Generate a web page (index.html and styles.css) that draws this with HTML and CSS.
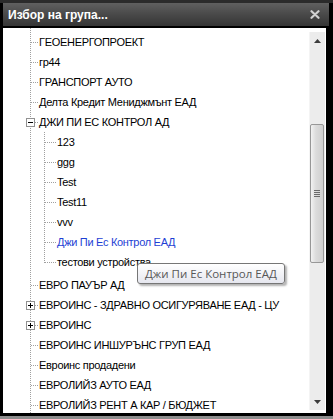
FILE: index.html
```html
<!DOCTYPE html>
<html lang="bg">
<head>
  <meta charset="UTF-8">
  <meta name="viewport" content="width=device-width, initial-scale=1.0">
  <title>Избор на група</title>
  <link rel="stylesheet" href="styles.css">
</head>
<body>

  <div class="window">
    <div class="titlebar">
      <span class="title">Избор на група...</span>
      <svg class="close" width="10" height="9" viewBox="0 0 10 9">
        <path d="M1.5 1.2l7 6.6M8.5 1.2l-7 6.6" stroke="#d2d2d2" stroke-width="2.2" stroke-linecap="round"/>
      </svg>
    </div>

    <div class="panel">
      <ul class="tree">
        <li><div class="row"><span class="conn"></span><span class="label">ГЕОЕНЕРГОПРОЕКТ</span></div></li>
        <li><div class="row"><span class="conn"></span><span class="label">гр44</span></div></li>
        <li><div class="row"><span class="conn"></span><span class="label">ГРАНСПОРТ АУТО</span></div></li>
        <li><div class="row"><span class="conn"></span><span class="label">Делта Кредит Мениджмънт ЕАД</span></div></li>
        <li>
          <div class="row">
            <svg class="toggle" width="9" height="9" viewBox="0 0 9 9">
              <rect x="0.5" y="0.5" width="8" height="8" fill="#fff" stroke="#919191"/>
              <path d="M2 4.5h5" stroke="#000"/>
            </svg>
            <span class="conn short"></span><span class="label">ДЖИ ПИ ЕС КОНТРОЛ АД</span>
          </div>
          <ul class="children">
            <li><div class="row"><span class="conn"></span><span class="label">123</span></div></li>
            <li><div class="row"><span class="conn"></span><span class="label">ggg</span></div></li>
            <li><div class="row"><span class="conn"></span><span class="label">Test</span></div></li>
            <li><div class="row"><span class="conn"></span><span class="label">Test11</span></div></li>
            <li><div class="row"><span class="conn"></span><span class="label">vvv</span></div></li>
            <li><div class="row"><span class="conn"></span><span class="label hover">Джи Пи Ес Контрол ЕАД</span></div></li>
            <li><div class="row"><span class="conn"></span><span class="label">тестови устройства</span></div></li>
          </ul>
        </li>
        <li><div class="row"><span class="conn"></span><span class="label">ЕВРО ПАУЪР АД</span></div></li>
        <li>
          <div class="row">
            <svg class="toggle" width="9" height="9" viewBox="0 0 9 9">
              <rect x="0.5" y="0.5" width="8" height="8" fill="#fff" stroke="#919191"/>
              <path d="M2 4.5h5M4.5 2v5" stroke="#000"/>
            </svg>
            <span class="conn short"></span><span class="label">ЕВРОИНС - ЗДРАВНО ОСИГУРЯВАНЕ ЕАД - ЦУ</span>
          </div>
        </li>
        <li>
          <div class="row">
            <svg class="toggle" width="9" height="9" viewBox="0 0 9 9">
              <rect x="0.5" y="0.5" width="8" height="8" fill="#fff" stroke="#919191"/>
              <path d="M2 4.5h5M4.5 2v5" stroke="#000"/>
            </svg>
            <span class="conn short"></span><span class="label">ЕВРОИНС</span>
          </div>
        </li>
        <li><div class="row"><span class="conn"></span><span class="label">ЕВРОИНС ИНШУРЪНС ГРУП ЕАД</span></div></li>
        <li><div class="row"><span class="conn"></span><span class="label">Евроинс продадени</span></div></li>
        <li><div class="row"><span class="conn"></span><span class="label">ЕВРОЛИЙЗ АУТО ЕАД</span></div></li>
        <li><div class="row"><span class="conn"></span><span class="label">ЕВРОЛИЙЗ РЕНТ А КАР / БЮДЖЕТ</span></div></li>
      </ul>

      <div class="scrollbar">
        <div class="sb-button">
          <svg width="7" height="4" viewBox="0 0 7 4"><path d="M3.5 0L7 4H0z" fill="#3c3c3c"/></svg>
        </div>
        <div class="sb-track">
          <div class="sb-thumb"><span class="grip"></span></div>
        </div>
        <div class="sb-button">
          <svg width="7" height="4" viewBox="0 0 7 4"><path d="M0 0h7L3.5 4z" fill="#3c3c3c"/></svg>
        </div>
      </div>

      <div class="tooltip">Джи Пи Ес Контрол ЕАД</div>
    </div>
  </div>

</body>
</html>
```

FILE: styles.css
```css
body {
  margin: 0;
  height: 419px;
  overflow: hidden;
  background: linear-gradient(#2b2b2b 0, #2b2b2b 416px, #8d8d8d 416px);
  font-family: "Liberation Sans", Arial, sans-serif;
}

.window {
  margin-top: 3px;
  height: 413px;
  box-sizing: border-box;
  background-color: #000;
  padding: 0 4px 3px 3px;
  display: flex;
  flex-direction: column;
}

.titlebar {
  height: 23px;
  flex-shrink: 0;
  background: linear-gradient(#606060, #4b4b4b 45%, #353535);
  display: flex;
  align-items: center;
  justify-content: space-between;
  padding: 0 9px 0 5px;
}

.title {
  color: #fff;
  font-weight: bold;
  font-size: 12px;
}

.panel {
  position: relative;
  flex: 1;
  margin: 2px 3px 0 0;
  background-color: #fff;
  display: flex;
  overflow: hidden;
}

/* tree */

.tree,
.children {
  list-style: none;
  margin: 0;
  padding: 0;
}

.tree {
  flex: 1;
  padding-top: 4px;
  font-size: 11px;
  color: #000;
  background-image: linear-gradient(#a0a0a0 50%, transparent 50%);
  background-size: 1px 2px;
  background-position: 27px 0;
  background-repeat: repeat-y;
}

.row {
  height: 20px;
  display: flex;
  align-items: center;
  padding-left: 28px;
  white-space: nowrap;
}

.conn {
  width: 8px;
  height: 1px;
  flex-shrink: 0;
  background-image: linear-gradient(to right, #a0a0a0 50%, transparent 50%);
  background-size: 2px 1px;
}

.conn.short {
  width: 4px;
}

.toggle {
  margin-left: -5px;
  flex-shrink: 0;
}

.label {
  letter-spacing: -0.3px;
}

.label.hover {
  color: #1e3fd4;
}

.children {
  margin-bottom: 3px;
  background-image: linear-gradient(#a0a0a0 50%, transparent 50%);
  background-size: 1px 2px;
  background-position: 41px 0;
  background-repeat: repeat-y;
}

.children .row {
  padding-left: 42px;
}

.children .conn {
  width: 11px;
  margin-right: 1px;
}

.children li:last-child {
  background: linear-gradient(#fff, #fff) 41px 11px / 1px 9px no-repeat;
}

/* scrollbar */

.scrollbar {
  width: 15px;
  flex-shrink: 0;
  margin: 4px 1px 3px 0;
  background-color: #ececec;
  border-left: 1px solid #f4f4f4;
  display: flex;
  flex-direction: column;
}

.sb-button {
  height: 17px;
  display: flex;
  align-items: center;
  justify-content: center;
}

.sb-track {
  flex: 1;
  padding-top: 75px;
}

.sb-thumb {
  height: 137px;
  margin: 0 1px 0 0;
  border: 1px solid #979797;
  border-radius: 2px;
  background: linear-gradient(to right, #f2f2f2, #dcdcdc 40%, #cfcfcf);
  display: flex;
  align-items: center;
  justify-content: center;
}

.grip {
  width: 6px;
  height: 7px;
  background-image: linear-gradient(#6a6a6a 1px, transparent 1px);
  background-size: 6px 2px;
}

/* tooltip */

.tooltip {
  position: absolute;
  left: 134px;
  top: 235px;
  height: 19px;
  padding: 0 7px;
  border: 1px solid #767676;
  border-radius: 3px;
  background: linear-gradient(#ffffff, #e6e7ef);
  box-shadow: 2px 2px 2px rgba(0, 0, 0, 0.3);
  color: #575757;
  font-family: "Open Sans", sans-serif;
  font-size: 11.5px;
  line-height: 19px;
  white-space: nowrap;
}
```
